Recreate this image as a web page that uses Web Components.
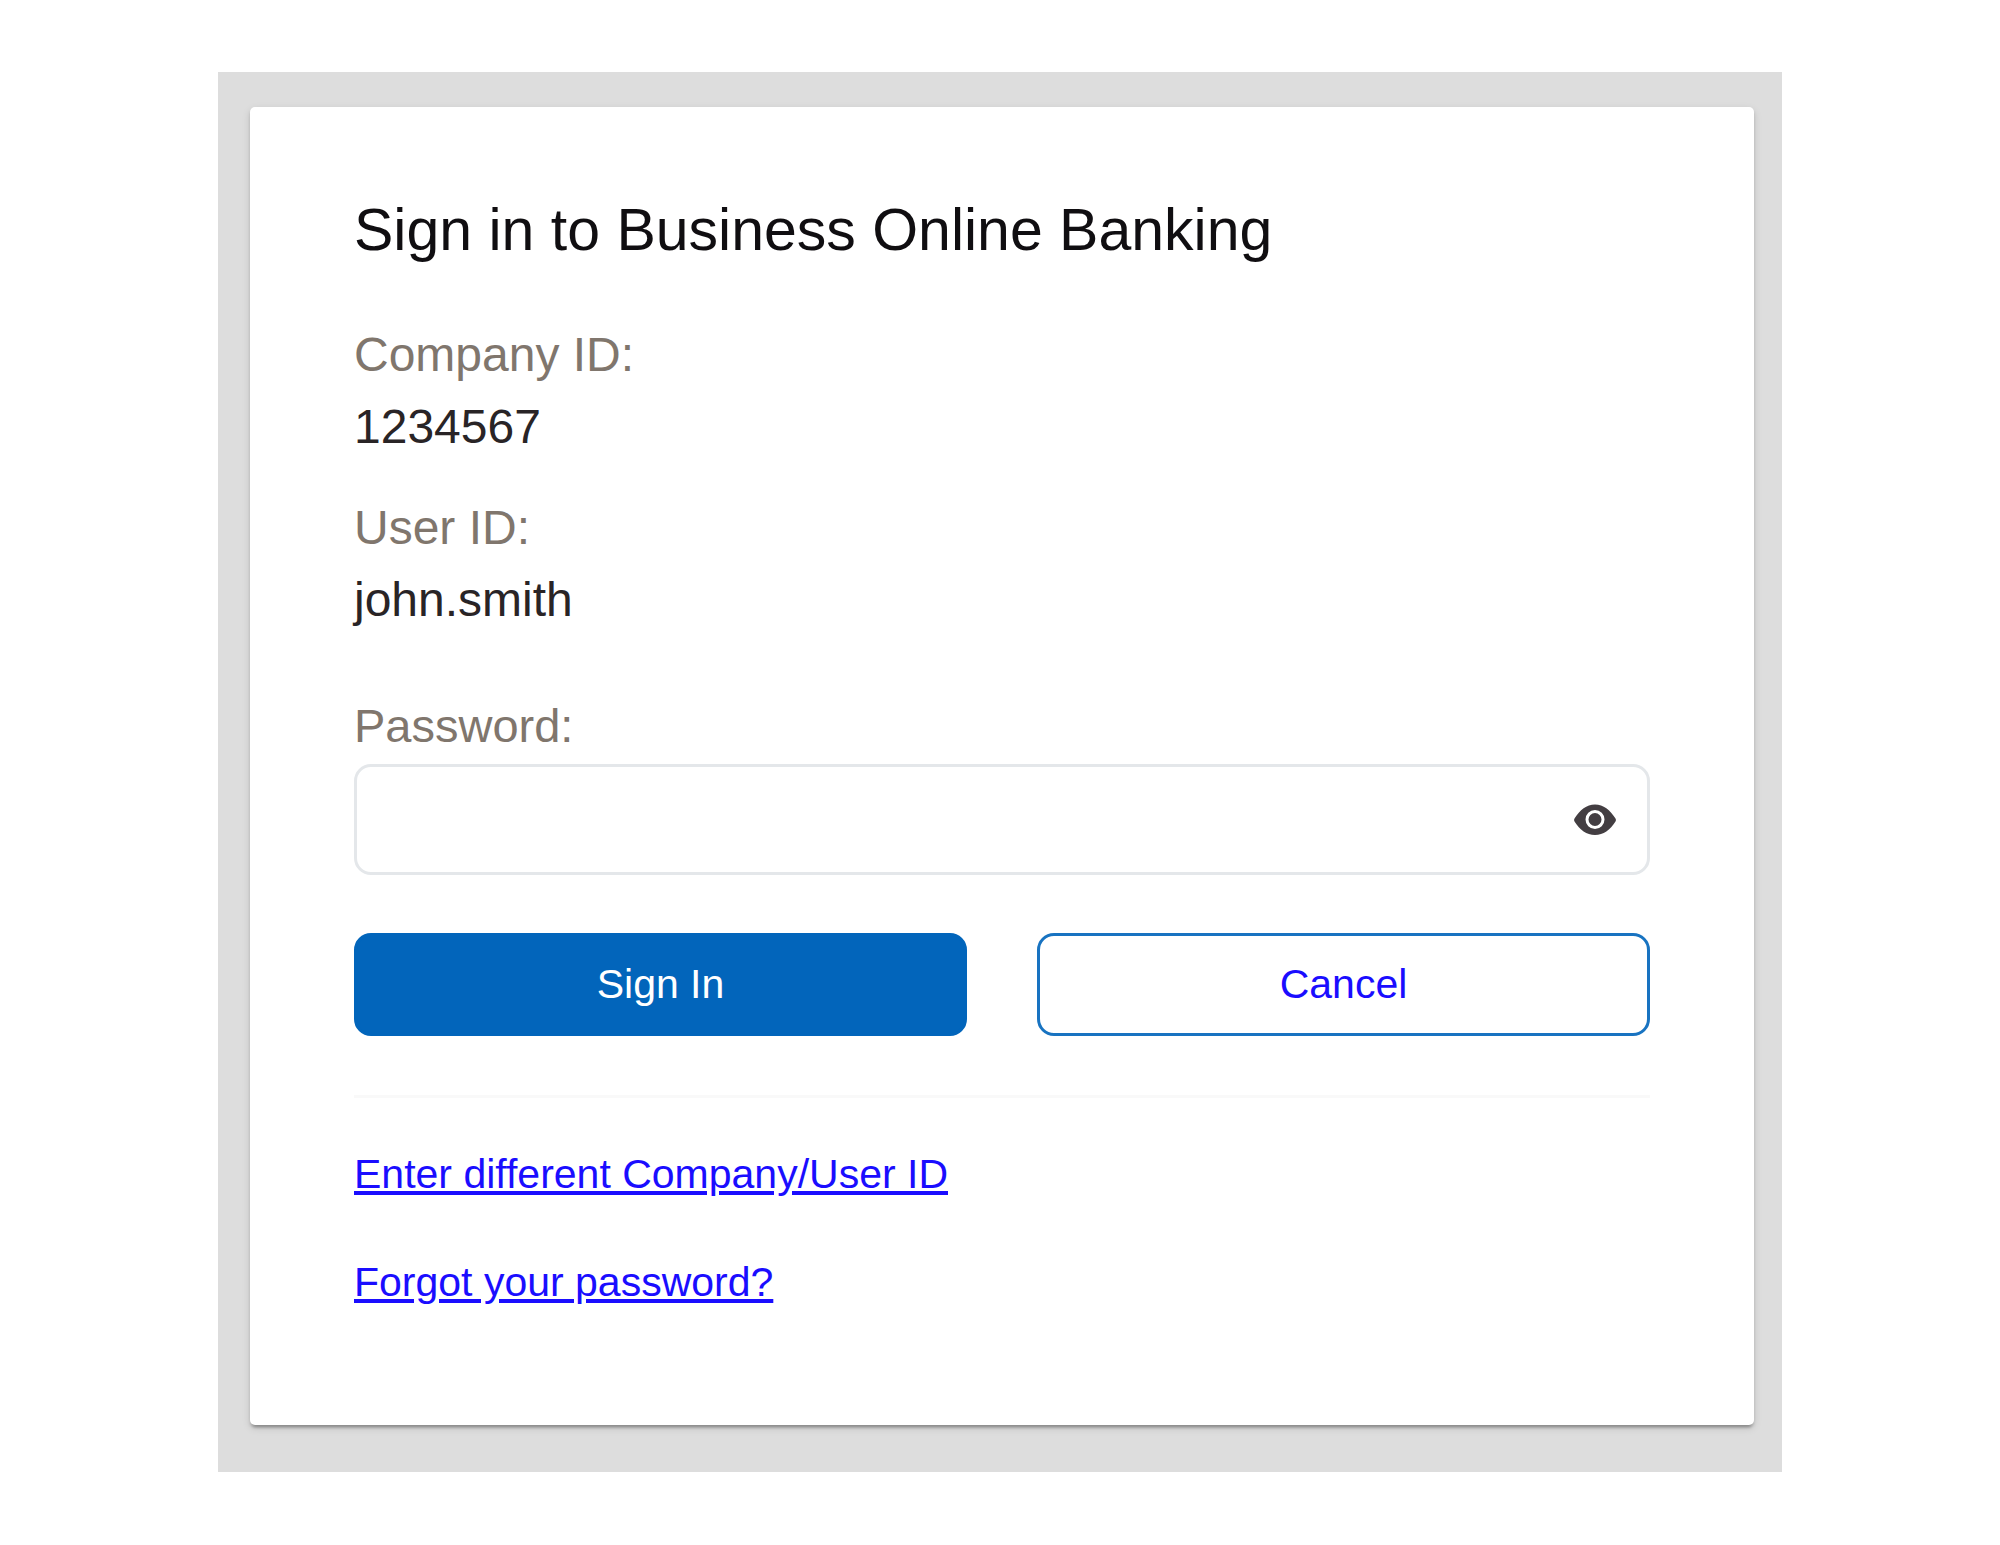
<!DOCTYPE html>
<html lang="en">
<head>
<meta charset="utf-8">
<title>Business Online Banking</title>
<style>
  body { margin: 0; background: #fff; font-family: "Liberation Sans", Arial, sans-serif; }
</style>
</head>
<body>
<sign-in-page></sign-in-page>

<template id="sign-in-page">
  <style>
    :host { display: block; padding: 72px 24px; }
    main { max-width: 1564px; margin: 0 auto; box-sizing: border-box; padding: 35px 28px 47px 32px; background: #ddd; }
  </style>
  <main><sign-in-card></sign-in-card></main>
</template>

<template id="sign-in-card">
  <style>
    :host {
      display: block; box-sizing: border-box; padding: 87px 104px 113px; background: #fff; border-radius: 5px;
      box-shadow: 0 5px 3px -3px rgba(0,0,0,.2), 0 3px 3px rgba(0,0,0,.14), 0 3px 8px rgba(0,0,0,.12);
    }
    h1 { margin: 0 0 53px; font-size: 59px; line-height: 72px; font-weight: 400; color: #100e11; }
    dl { display: flex; flex-direction: column; gap: 29px; margin: 0 0 54px; }
    form { margin: 0; }
    .actions { display: grid; grid-template-columns: 1fr 1fr; gap: 70px; margin-top: 58px; }
    hr { height: 3px; margin: 59px 0 46px; border: 0; background: #f9f9f9; }
    nav { display: flex; flex-direction: column; align-items: flex-start; gap: 48px; }
  </style>
  <h1>Sign in to Business Online Banking</h1>
  <dl>
    <id-entry><span slot="term">Company ID:</span>1234567</id-entry>
    <id-entry><span slot="term">User ID:</span>john.smith</id-entry>
  </dl>
  <form onsubmit="return false">
    <password-field>Password:</password-field>
    <div class="actions">
      <action-button variant="primary">Sign In</action-button>
      <action-button>Cancel</action-button>
    </div>
  </form>
  <hr>
  <nav>
    <help-link>Enter different Company/User ID</help-link>
    <help-link>Forgot your password?</help-link>
  </nav>
</template>

<template id="id-entry">
  <style>
    :host { display: block; font-size: 48px; line-height: 72px; }
    dt { color: #80766d; }
    dd { margin: 0; color: #292426; }
  </style>
  <dt><slot name="term"></slot></dt>
  <dd><slot></slot></dd>
</template>

<template id="password-field">
  <style>
    :host { display: flex; flex-direction: column; gap: 2px; }
    label { font-size: 47px; line-height: 72px; color: #80766d; }
    .box { display: flex; align-items: center; box-sizing: border-box; height: 111px; padding-right: 28px; border: 3px solid #e4e7ea; border-radius: 17px; }
    input { flex: 1; min-width: 0; height: 100%; box-sizing: border-box; padding: 0 24px; border: 0; outline: 0; background: none; font: inherit; font-size: 48px; color: #292426; }
    button { display: flex; padding: 0; border: 0; background: none; cursor: pointer; }
    svg { width: 48px; height: 48px; fill: #433e42; }
  </style>
  <label for="password"><slot></slot></label>
  <div class="box">
    <input id="password" type="password" autocomplete="current-password">
    <button type="button" aria-label="Show password">
      <svg viewBox="0 0 48 48" aria-hidden="true"><path d="M3.500 22.500C9 14 15.500 8.500 24 8.500S39 14 44.500 22.500Q45.500 24 44.500 25.500C39 34 32.500 39 24 39S9 34 3.500 25.500Q2.500 24 3.500 22.500Z"/><circle cx="24" cy="23.500" r="8" fill="none" stroke="#fff" stroke-width="3"/></svg>
    </button>
  </div>
</template>

<template id="action-button">
  <style>
    :host { display: block; }
    button { display: block; box-sizing: border-box; width: 100%; height: 103px; padding: 0 0 2px; border: 3px solid #1873c1; border-radius: 17px; background: #fff; color: #1a0dff; font: inherit; font-size: 41px; line-height: 60px; cursor: pointer; }
    :host([variant="primary"]) button { border-color: #0265bb; background: #0265bb; color: #fff; }
  </style>
  <button type="button"><slot></slot></button>
</template>

<template id="help-link">
  <style>
    :host { display: block; font-size: 41px; line-height: 60px; }
    a { color: #1a0dff; text-decoration: underline; }
  </style>
  <a href="#"><slot></slot></a>
</template>

<script>
  class TemplateElement extends HTMLElement {
    constructor() {
      super();
      const template = document.getElementById(this.localName);
      this.attachShadow({ mode: "open" }).append(template.content.cloneNode(true));
    }
  }
  class IdEntry extends TemplateElement {}
  class PasswordField extends TemplateElement {
    connectedCallback() {
      const input = this.shadowRoot.querySelector("input");
      const toggle = this.shadowRoot.querySelector("button");
      toggle.onclick = () => {
        const hidden = input.type === "password";
        input.type = hidden ? "text" : "password";
        toggle.setAttribute("aria-label", hidden ? "Hide password" : "Show password");
      };
    }
  }
  class ActionButton extends TemplateElement {}
  class HelpLink extends TemplateElement {}
  class SignInCard extends TemplateElement {}
  class SignInPage extends TemplateElement {}
  customElements.define("id-entry", IdEntry);
  customElements.define("password-field", PasswordField);
  customElements.define("action-button", ActionButton);
  customElements.define("help-link", HelpLink);
  customElements.define("sign-in-card", SignInCard);
  customElements.define("sign-in-page", SignInPage);
</script>
</body>
</html>
